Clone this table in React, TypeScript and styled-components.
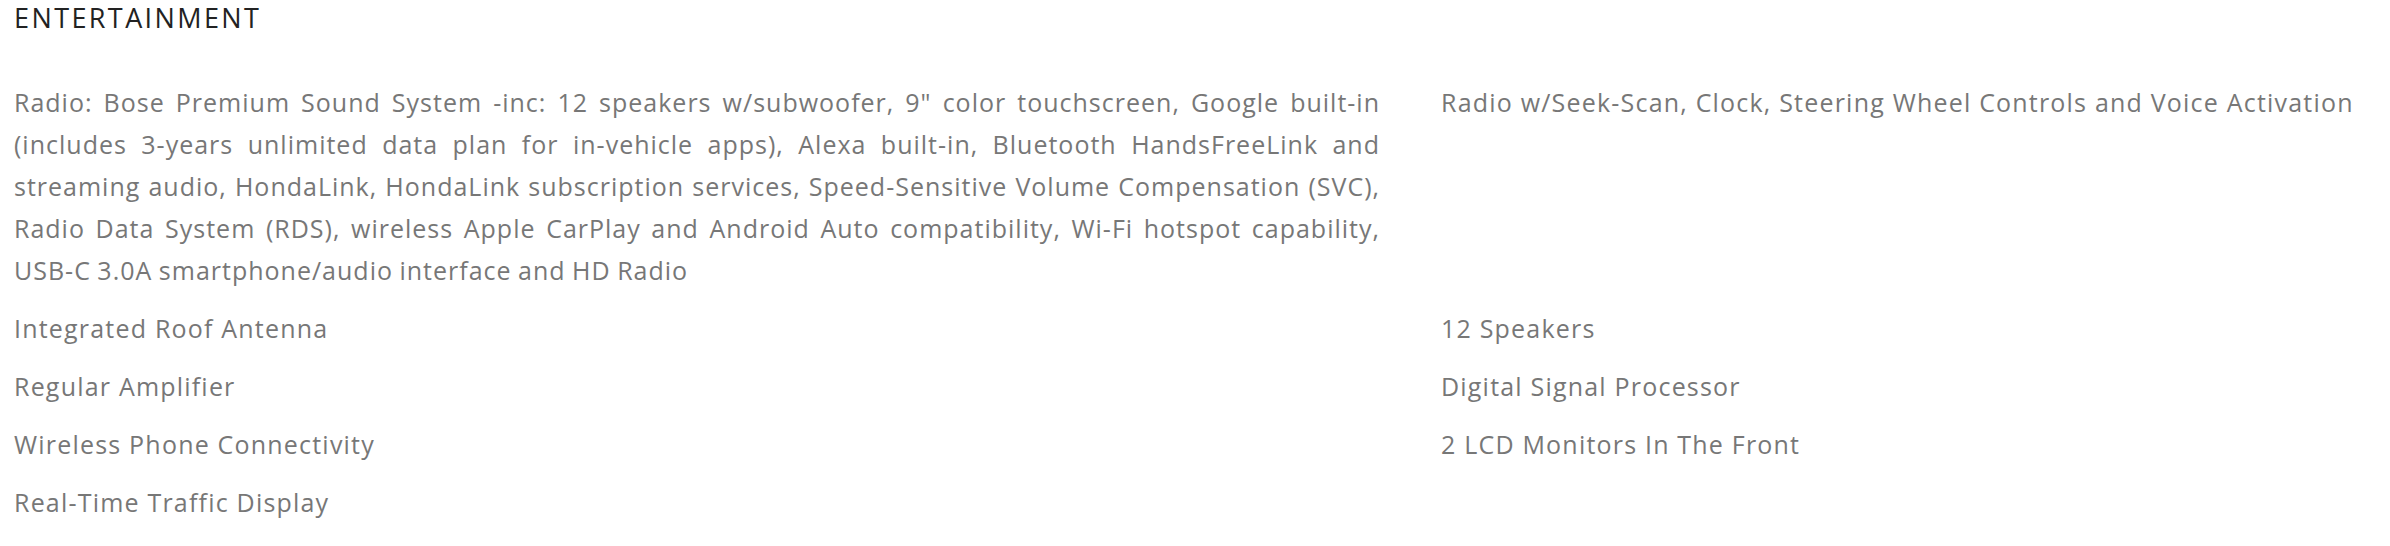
import React from "react";
import styled, { createGlobalStyle } from "styled-components";

const GlobalStyle = createGlobalStyle`
  html, body {
    margin: 0;
    padding: 0;
    background: #ffffff;
  }
  body {
    font-family: "Open Sans", "Noto Sans", Arial, sans-serif;
  }
`;

const Section = styled.section`
  display: flex;
  flex-direction: column;
  padding: 0 14px;
  font-family: "Open Sans", "Noto Sans", Arial, sans-serif;
`;

const Heading = styled.h3`
  margin: 0 0 45px 0;
  font-size: 27px;
  line-height: 36px;
  font-weight: 400;
  letter-spacing: 2.4px;
  color: #222222;
  text-transform: uppercase;
`;

const FeatureGrid = styled.div`
  display: grid;
  grid-template-columns: 1366px 1fr;
  column-gap: 61px;
  row-gap: 16px;
`;

// the long description is justified and a touch tighter so it wraps like the original
const Feature = styled.div<{ $justify?: boolean }>`
  font-size: 25px;
  line-height: 42px;
  letter-spacing: ${(p) => (p.$justify ? "1px" : "1.2px")};
  word-spacing: ${(p) => (p.$justify ? "-1px" : "0")};
  color: #777777;
  text-align: ${(p) => (p.$justify ? "justify" : "left")};
`;

const features: string[] = [
  'Radio: Bose Premium Sound System -inc: 12 speakers w/subwoofer, 9" color touchscreen, Google built-in (includes 3-years unlimited data plan for in-vehicle apps), Alexa built-in, Bluetooth HandsFreeLink and streaming audio, HondaLink, HondaLink subscription services, Speed-Sensitive Volume Compensation (SVC), Radio Data System (RDS), wireless Apple CarPlay and Android Auto compatibility, Wi-Fi hotspot capability, USB-C 3.0A smartphone/audio interface and HD Radio',
  "Radio w/Seek-Scan, Clock, Steering Wheel Controls and Voice Activation",
  "Integrated Roof Antenna",
  "12 Speakers",
  "Regular Amplifier",
  "Digital Signal Processor",
  "Wireless Phone Connectivity",
  "2 LCD Monitors In The Front",
  "Real-Time Traffic Display",
];

const App: React.FC = () => {
  return (
    <>
      <GlobalStyle />
      <Section>
        <Heading>Entertainment</Heading>
        <FeatureGrid>
          {features.map((f, i) => (
            <Feature key={i} $justify={i === 0}>
              {f}
            </Feature>
          ))}
        </FeatureGrid>
      </Section>
    </>
  );
};

export default App;
